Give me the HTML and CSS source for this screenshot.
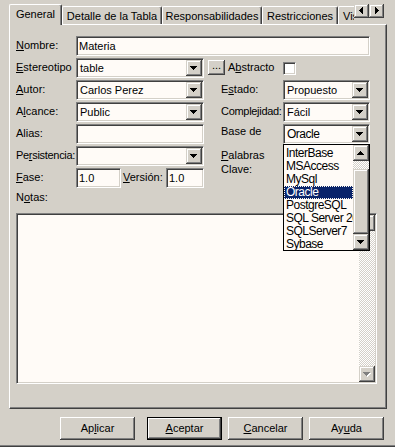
FILE: index.html
```html
<!DOCTYPE html>
<html lang="es">
<head>
<meta charset="utf-8">
<title>Propiedades</title>
<link rel="stylesheet" href="styles.css">
</head>
<body>
<div class="dialog">
  <div class="tabstrip">
    <div class="tab active w-gen">General</div>
    <div class="tab w-det">Detalle de la Tabla</div>
    <div class="tab w-resp">Responsabilidades</div>
    <div class="tab w-restr">Restricciones</div>
    <div class="tab w-vi">Vistas</div>
    <div class="tabscroll">
      <div class="sbtn raised"><svg width="15" height="14" viewBox="0 0 15 14" shape-rendering="crispEdges"><path d="M5 6h1v1H5z M6 5h1v3H6z M7 4h1v5H7z M8 3h1v7H8z" fill="#000"/></svg></div>
      <div class="sbtn raised"><svg width="15" height="14" viewBox="0 0 15 14" shape-rendering="crispEdges"><path d="M6 3h1v7H6z M7 4h1v5H7z M8 5h1v3H8z M9 6h1v1H9z" fill="#000"/></svg></div>
    </div>
  </div>

  <div class="panel">
    <div class="form">
      <div class="lbl"><u>N</u>ombre:</div>
      <div class="field span-all">Materia</div>

      <div class="lbl"><u>E</u>stereotipo</div>
      <div class="combo"><span class="val">table</span><span class="cbtn raised"><svg width="14" height="16" viewBox="0 0 14 16" shape-rendering="crispEdges"><path d="M3 6h7v1H3z M4 7h5v1H4z M5 8h3v1H5z M6 9h1v1H6z" fill="#000"/></svg></span></div>
      <div class="abs-group">
        <div class="dots push">...</div>
        <div class="abs-lbl">A<u>b</u>stracto</div>
      </div>
      <div class="checkcell"><div class="check"></div></div>

      <div class="lbl"><u>A</u>utor:</div>
      <div class="combo"><span class="val">Carlos Perez</span><span class="cbtn raised"><svg width="14" height="16" viewBox="0 0 14 16" shape-rendering="crispEdges"><path d="M3 6h7v1H3z M4 7h5v1H4z M5 8h3v1H5z M6 9h1v1H6z" fill="#000"/></svg></span></div>
      <div class="rlbl col4">E<u>s</u>tado:</div>
      <div class="combo"><span class="val">Propuesto</span><span class="cbtn raised"><svg width="14" height="16" viewBox="0 0 14 16" shape-rendering="crispEdges"><path d="M3 6h7v1H3z M4 7h5v1H4z M5 8h3v1H5z M6 9h1v1H6z" fill="#000"/></svg></span></div>

      <div class="lbl">A<u>l</u>cance:</div>
      <div class="combo"><span class="val">Public</span><span class="cbtn raised"><svg width="14" height="16" viewBox="0 0 14 16" shape-rendering="crispEdges"><path d="M3 6h7v1H3z M4 7h5v1H4z M5 8h3v1H5z M6 9h1v1H6z" fill="#000"/></svg></span></div>
      <div class="rlbl col4 tight">Complejidad:</div>
      <div class="combo"><span class="val">Fácil</span><span class="cbtn raised"><svg width="14" height="16" viewBox="0 0 14 16" shape-rendering="crispEdges"><path d="M3 6h7v1H3z M4 7h5v1H4z M5 8h3v1H5z M6 9h1v1H6z" fill="#000"/></svg></span></div>

      <div class="lbl">Alias:</div>
      <div class="field"></div>
      <div class="rlbl col4 base">Base de</div>
      <div class="combo"><span class="val listfont">Oracle</span><span class="cbtn raised"><svg width="14" height="16" viewBox="0 0 14 16" shape-rendering="crispEdges"><path d="M3 6h7v1H3z M4 7h5v1H4z M5 8h3v1H5z M6 9h1v1H6z" fill="#000"/></svg></span></div>

      <div class="lbl tight">Pe<u>r</u>sistencia:</div>
      <div class="combo"><span class="val"></span><span class="cbtn raised"><svg width="14" height="16" viewBox="0 0 14 16" shape-rendering="crispEdges"><path d="M3 6h7v1H3z M4 7h5v1H4z M5 8h3v1H5z M6 9h1v1H6z" fill="#000"/></svg></span></div>
      <div class="rlbl col4 two"><u>P</u>alabras<br>Clave:</div>
      <div class="field tall"></div>

      <div class="lbl"><u>F</u>ase:</div>
      <div class="fase-group">
        <div class="field fase">1.0</div>
        <div class="ver-lbl"><u>V</u>ersión:</div>
        <div class="field ver">1.0</div>
      </div>
    </div>

    <div class="notas-lbl">N<u>o</u>tas:</div>
    <div class="notes">
      <div class="vscroll hatched">
        <div class="sb raised"><svg width="16" height="16" viewBox="0 0 16 16" shape-rendering="crispEdges"><path d="M7 6h1v1H7z M6 7h3v1H6z M5 8h5v1H5z M4 9h7v1H4z" fill="#808080"/></svg></div>
        <div class="track"></div>
        <div class="sb raised"><svg width="16" height="16" viewBox="0 0 16 16" shape-rendering="crispEdges"><path d="M5 7h7v1H5z M6 8h5v1H6z M7 9h3v1H7z M8 10h1v1H8z" fill="#fff"/><path d="M4 6h7v1H4z M5 7h5v1H5z M6 8h3v1H6z M7 9h1v1H7z" fill="#808080"/></svg></div>
      </div>
    </div>
  </div>

  <div class="buttons">
    <div class="btn push gap-extra">Ap<u>l</u>icar</div>
    <div class="btn push default"><u>A</u>ceptar</div>
    <div class="btn push"><u>C</u>ancelar</div>
    <div class="btn push">Ay<u>u</u>da</div>
  </div>

  <div class="droplist">
    <div class="items">
      <div class="item">InterBase</div>
      <div class="item">MSAccess</div>
      <div class="item">MySql</div>
      <div class="item sel">Oracle</div>
      <div class="item">PostgreSQL</div>
      <div class="item">SQL Server 2000</div>
      <div class="item">SQLServer7</div>
      <div class="item">Sybase</div>
    </div>
    <div class="lscroll hatched">
      <div class="sb raised"><svg width="16" height="16" viewBox="0 0 16 16" shape-rendering="crispEdges"><path d="M7 6h1v1H7z M6 7h3v1H6z M5 8h5v1H5z M4 9h7v1H4z" fill="#000"/></svg></div>
      <div class="gap-track"></div>
      <div class="thumb raised"></div>
      <div class="sb raised"><svg width="16" height="16" viewBox="0 0 16 16" shape-rendering="crispEdges"><path d="M4 6h7v1H4z M5 7h5v1H5z M6 8h3v1H6z M7 9h1v1H7z" fill="#000"/></svg></div>
    </div>
  </div>
</div>
</body>
</html>
```

FILE: styles.css
```css
* { box-sizing: border-box; }
html, body { margin: 0; padding: 0; }
body {
  width: 395px;
  height: 447px;
  overflow: hidden;
  background: #d4d0c8;
  font: 11px/13px "Liberation Sans", Arial, sans-serif;
  color: #000;
}
u { text-decoration: underline; text-underline-offset: 1px; }

.dialog {
  position: relative;
  width: 395px;
  height: 447px;
  border-bottom: 1px solid #404040;
  box-shadow: inset 0 -1px #808080;
}

/* raised / sunken styles */
.raised {
  background: #d4d0c8;
  box-shadow: inset -1px -1px #404040, inset 1px 1px #d4d0c8, inset -2px -2px #808080, inset 2px 2px #fff;
}
.push {
  background: #d4d0c8;
  box-shadow: inset -1px -1px #404040, inset 1px 1px #fff, inset -2px -2px #808080, inset 2px 2px #d4d0c8;
}
.hatched {
  background: repeating-conic-gradient(#d4d0c8 0 25%, #fff 0 50%) 0 0 / 2px 2px;
}

/* tabs */
.tabstrip {
  display: flex;
  align-items: flex-end;
  height: 24px;
  padding-left: 9px;
}
.tab {
  height: 18px;
  padding-top: 3px;
  text-align: center;
  white-space: nowrap;
  overflow: hidden;
  border-top: 1px solid #fff;
  border-left: 1px solid #fff;
  border-right: 1px solid #404040;
  border-radius: 2px 2px 0 0;
  box-shadow: inset -1px 0 #808080;
}
.tab.active {
  height: 21px;
  margin-bottom: -1px;
  position: relative;
  z-index: 2;
  background: #d4d0c8;
}
.w-gen { width: 53px; }
.w-det { width: 100px; }
.w-resp { width: 100px; }
.w-restr { width: 76px; }
.w-vi {
  width: 16px;
  text-align: left;
  padding-left: 4px;
  border-right: none;
  box-shadow: none;
  border-radius: 2px 0 0 0;
}
.tabscroll {
  display: flex;
  align-self: flex-start;
  margin-top: 4px;
}
.sbtn { width: 15px; height: 14px; }
.sbtn svg { display: block; }

/* panel */
.panel {
  margin-left: 9px;
  width: 378px;
  height: 385px;
  border: 1px solid;
  border-color: #fff #404040 #404040 #fff;
  box-shadow: inset -1px -1px #808080;
  padding: 11px 0 0 6px;
}
.form {
  display: grid;
  grid-template-columns: 60px 128px 17px 62px 87px;
  grid-auto-rows: 20px;
  row-gap: 2px;
}
.lbl, .rlbl {
  padding-top: 3px;
  white-space: nowrap;
}
.tight { letter-spacing: -0.3px; }
.col4 { grid-column: 4; }
.rlbl.base { padding-top: 1px; }
.rlbl.two {
  grid-row: span 2;
  padding-top: 2px;
  line-height: 14px;
}
.span-all { grid-column: 2 / 6; }

.field, .combo, .check {
  border: 1px solid;
  border-color: #808080 #fff #fff #808080;
  box-shadow: inset 1px 1px #404040, inset -1px -1px #d4d0c8;
  background: #fffbf7;
}
.field {
  height: 20px;
  padding: 0 2px;
  line-height: 18px;
  white-space: nowrap;
}
.field.tall { grid-column: 5; grid-row: span 2; height: 42px; }
.combo {
  display: flex;
  height: 20px;
  padding: 1px;
}
.combo .val {
  flex: 1;
  padding-left: 2px;
  line-height: 17px;
  white-space: nowrap;
  overflow: hidden;
}
.cbtn {
  width: 16px;
  height: 16px;
  display: flex;
  align-items: center;
  justify-content: center;
}
.cbtn svg { display: block; }
.listfont { font-size: 12px; letter-spacing: -0.5px; }

.abs-group {
  grid-column: 3 / 5;
  display: flex;
  align-items: flex-start;
}
.dots {
  margin-left: 4px;
  margin-top: 2px;
  width: 17px;
  height: 15px;
  line-height: 11px;
  text-align: center;
}
.abs-lbl {
  margin-left: 3px;
  padding-top: 3px;
}
.checkcell { padding-top: 4px; }
.check { width: 13px; height: 13px; background: #fff; }

.fase-group {
  display: flex;
  align-items: flex-start;
}
.field.fase { width: 45px; }
.ver-lbl { width: 43px; margin-left: 2px; padding-top: 3px; white-space: nowrap; }
.field.ver { width: 38px; }

.notas-lbl { margin-top: 3px; }
.notes {
  margin-top: 9px;
  width: 361px;
  height: 171px;
  border: 1px solid;
  border-color: #808080 #fff #fff #808080;
  box-shadow: inset 1px 1px #404040, inset -1px -1px #d4d0c8;
  background: #fffbf7;
  padding: 1px;
  display: flex;
  justify-content: flex-end;
}
.vscroll {
  width: 16px;
  display: flex;
  flex-direction: column;
}
.sb { width: 16px; height: 16px; flex: none; }
.sb svg { display: block; }
.track { flex: 1; }

/* buttons */
.buttons {
  display: flex;
  justify-content: flex-end;
  gap: 6px;
  margin-top: 8px;
  padding-right: 11px;
}
.btn {
  width: 75px;
  height: 23px;
  line-height: 23px;
  text-align: center;
}
.btn.gap-extra { margin-right: 6px; }
.btn.default { border: 1px solid #000; line-height: 21px; }

/* dropdown list popup */
.droplist {
  position: absolute;
  left: 283px;
  top: 144px;
  width: 87px;
  height: 107px;
  border: 1px solid #000;
  background: #fffbf7;
  display: flex;
  z-index: 5;
}
.items {
  flex: 1;
  overflow: hidden;
  padding-top: 2px;
  font-size: 12px;
  letter-spacing: -0.5px;
}
.item {
  height: 13px;
  line-height: 13px;
  padding-left: 2px;
  white-space: nowrap;
}
.item.sel {
  background: #0a246a;
  color: #fff;
  outline: 1px dotted #fffbf0;
  outline-offset: -1px;
}
.lscroll {
  width: 16px;
  display: flex;
  flex-direction: column;
}
.gap-track { height: 8px; flex: none; }
.thumb { flex: 1; }
```
